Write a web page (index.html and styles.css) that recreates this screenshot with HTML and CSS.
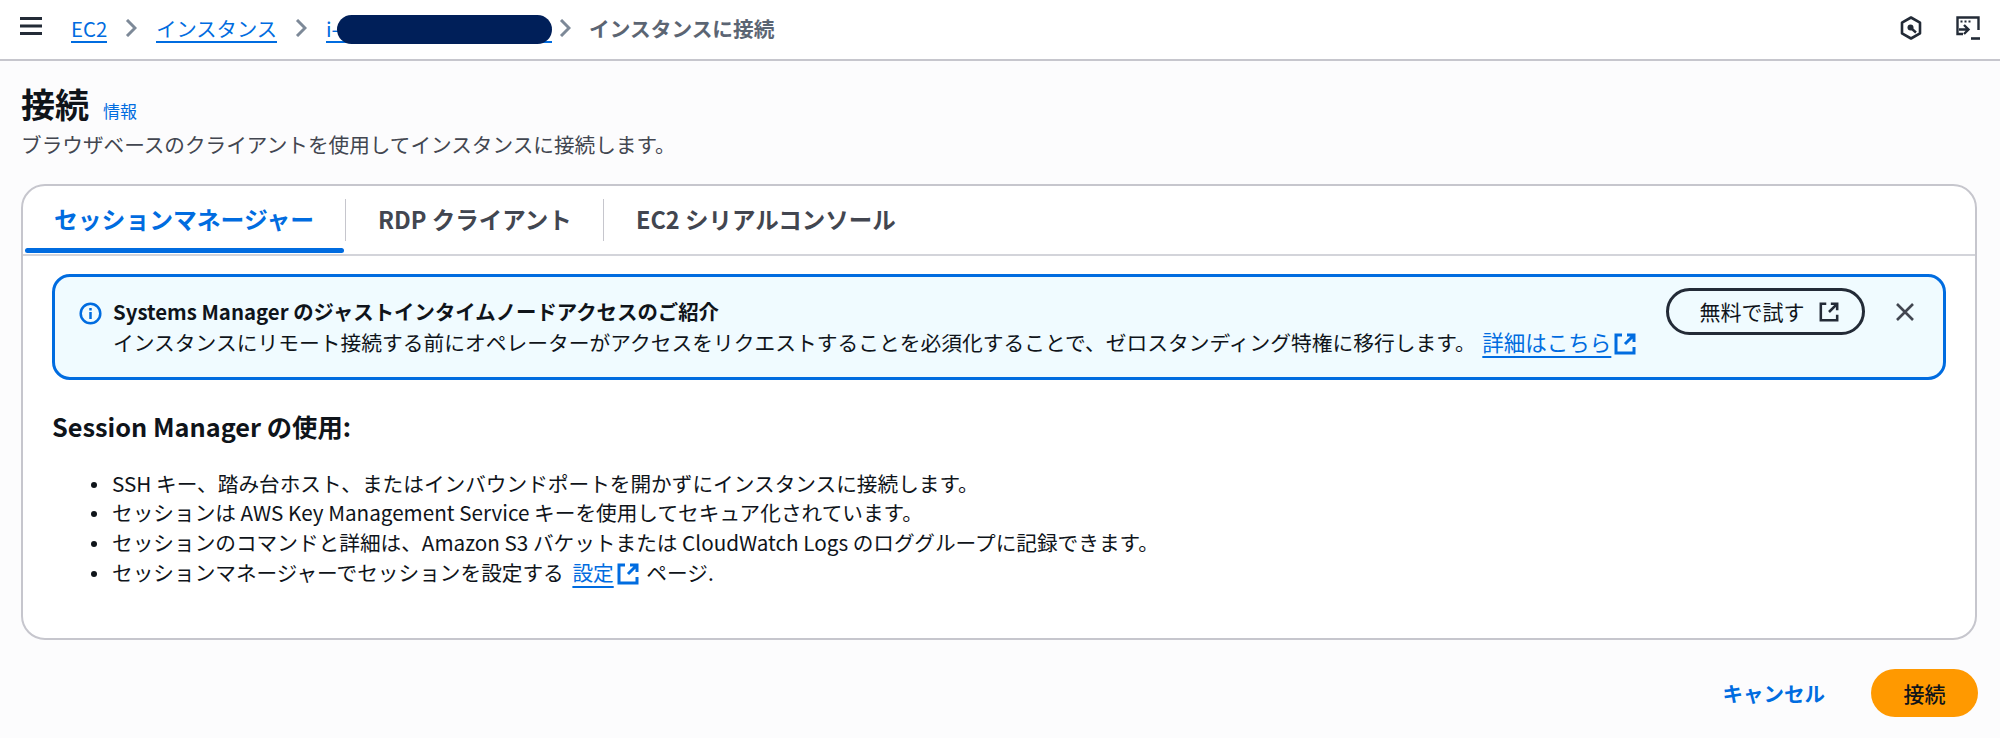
FILE: index.html
```html
<!DOCTYPE html>
<html lang="ja">
<head>
<meta charset="utf-8">
<title>インスタンスに接続</title>
<link rel="stylesheet" href="styles.css">
</head>
<body>
<header class="topbar">
  <svg class="menu-icon" width="22" height="18" viewBox="0 0 22 18"><path d="M0 1.500h22M0 9h22M0 16.500h22" stroke="#232b37" stroke-width="3" fill="none"/></svg>
  <nav class="crumbs">
    <a class="crumb crumb-ec2">EC2</a>
    <svg class="chev" width="12" height="18" viewBox="0 0 12 18"><path d="M2 1l8 8-8 8" stroke="#7d8998" stroke-width="3" fill="none"/></svg>
    <a class="crumb">インスタンス</a>
    <svg class="chev" width="12" height="18" viewBox="0 0 12 18"><path d="M2 1l8 8-8 8" stroke="#7d8998" stroke-width="3" fill="none"/></svg>
    <a class="crumb crumb-id">i-<span class="redact"></span></a>
    <svg class="chev chev-tight" width="12" height="18" viewBox="0 0 12 18"><path d="M2 1l8 8-8 8" stroke="#7d8998" stroke-width="3" fill="none"/></svg>
    <span class="crumb-current">インスタンスに接続</span>
  </nav>
  <div class="top-icons">
    <svg width="22" height="24" viewBox="0 0 22 24"><path d="M11 1.500l9 5.200v10.600l-9 5.200-9-5.200V6.700z" fill="none" stroke="#232b37" stroke-width="2.600" stroke-linejoin="round"/><circle cx="10.500" cy="11.500" r="3" fill="#232b37"/><path d="M12 13l4 3.500" stroke="#232b37" stroke-width="2.400"/></svg>
    <svg width="25" height="25" viewBox="0 0 25 25"><path d="M7 18H1.500V1.500h21V14" fill="none" stroke="#232b37" stroke-width="2.400"/><path d="M4.500 5.500h2M8.500 5.500h2M12.500 5.500h2" stroke="#232b37" stroke-width="2.200"/><path d="M8 9l4.500 4.500L8 18M3 13.500h9" fill="none" stroke="#232b37" stroke-width="2.400"/><path d="M15 22.500h9" stroke="#232b37" stroke-width="2.600"/></svg>
  </div>
</header>

<main class="page">
  <div class="title-row">
    <h1 class="title">接続</h1>
    <a class="info">情報</a>
  </div>
  <p class="desc">ブラウザベースのクライアントを使用してインスタンスに接続します。</p>

  <section class="card">
    <div class="tabs">
      <div class="tab tab-active">セッションマネージャー</div>
      <div class="tab tab-rdp">RDP クライアント</div>
      <div class="tab tab-last">EC2 シリアルコンソール</div>
    </div>
    <div class="card-body">
      <div class="alert">
        <svg class="alert-icon" width="23" height="23" viewBox="0 0 23 23"><circle cx="11.500" cy="11.500" r="9.800" fill="none" stroke="#006ce0" stroke-width="2.500"/><path d="M11.500 10v7" stroke="#006ce0" stroke-width="2.500"/><path d="M11.500 6v2.500" stroke="#006ce0" stroke-width="2.500"/></svg>
        <div class="alert-text">
          <div class="alert-title">Systems Manager のジャストインタイムノードアクセスのご紹介</div>
          <div>インスタンスにリモート接続する前にオペレーターがアクセスをリクエストすることを必須化することで、ゼロスタンディング特権に移行します。 <a class="link link-more">詳細はこちら</a><svg class="ext" width="22" height="22" viewBox="0 0 22 22"><path d="M8 2H2v18h18v-6M13 2h7v7M20 2l-9 9" fill="none" stroke="#006ce0" stroke-width="3"/></svg></div>
        </div>
        <button class="try-btn">無料で試す<svg width="20" height="20" viewBox="0 0 22 22"><path d="M8 2H2v18h18v-6M13 2h7v7M20 2l-9 9" fill="none" stroke="#232b37" stroke-width="2.800"/></svg></button>
        <svg class="close" width="20" height="20" viewBox="0 0 20 20"><path d="M2 2l16 16M18 2L2 18" stroke="#424650" stroke-width="2.600"/></svg>
      </div>
      <h2 class="section-title">Session Manager の使用:</h2>
      <ul class="bullets">
        <li>SSH キー、踏み台ホスト、またはインバウンドポートを開かずにインスタンスに接続します。</li>
        <li>セッションは AWS Key Management Service キーを使用してセキュア化されています。</li>
        <li>セッションのコマンドと詳細は、Amazon S3 バケットまたは CloudWatch Logs のロググループに記録できます。</li>
        <li>セッションマネージャーでセッションを設定する <a class="link link-setting">設定</a><svg class="ext ext-setting" width="22" height="22" viewBox="0 0 22 22"><path d="M8 2H2v18h18v-6M13 2h7v7M20 2l-9 9" fill="none" stroke="#006ce0" stroke-width="3"/></svg> ページ.</li>
      </ul>
    </div>
  </section>

  <footer class="actions">
    <a class="cancel">キャンセル</a>
    <button class="connect">接続</button>
  </footer>
</main>
</body>
</html>
```
FILE: styles.css
```css
* { box-sizing: border-box; }
html, body { margin: 0; padding: 0; }
body {
  width: 2000px;
  height: 738px;
  overflow: hidden;
  background: #fcfcfd;
  color: #0f141a;
  font-family: "Noto Sans CJK JP", "Noto Sans", sans-serif;
  font-size: 20px;
}
a { color: #006ce0; }
.topbar {
  height: 61px;
  background: #fff;
  border-bottom: 2px solid #c6c6cd;
  display: flex;
  align-items: center;
  padding: 0 19px 3px 20px;
}
.menu-icon { margin-top: -5px; }
.crumbs {
  display: flex;
  align-items: center;
  margin-left: 29px;
  font-size: 20.300px;
  flex: 1;
}
.crumb {
  line-height: 26px;
  border-bottom: 2px solid #006ce0;
  margin-top: 1px;
}
.crumb-id {
  display: flex;
  align-items: center;
  height: 28px;
  width: 226px;
}
.redact {
  display: block;
  width: 215px;
  height: 29px;
  margin: 3px 0 0 -2px;
  background: #001f59;
  border-radius: 15px;
  flex: none;
}
.chev { margin: 0 19px 0 18px; flex: none; }
.chev-tight { margin: 0 18px 0 7px; }
.crumb-current { color: #5b6573; font-weight: 700; font-size: 20.700px; }
.top-icons { display: flex; align-items: center; gap: 34px; }
.page { padding: 0 23px 0 21px; }
.title-row {
  display: flex;
  align-items: baseline;
  gap: 14px;
  padding-top: 24px;
}
.title { margin: 0; font-size: 34px; line-height: 38px; font-weight: 700; }
.info { font-size: 17px; line-height: 24px; }
.desc { margin: 6px 0 0; font-size: 20.630px; line-height: 30px; color: #424650; }
.card {
  margin-top: 25px;
  height: 456px;
  background: #fff;
  border: 2px solid #c6c6cd;
  border-radius: 24px;
  overflow: hidden;
}
.tabs {
  display: flex;
  height: 70px;
  border-bottom: 2px solid #d3d4da;
  align-items: flex-start;
}
.tab {
  position: relative;
  font-size: 23.500px;
  font-weight: 700;
  line-height: 40px;
  height: 42px;
  margin-top: 13px;
  padding: 0 0 0 32px;
  color: #424650;
  border-right: 1px solid #c6c6cd;
  white-space: nowrap;
}
.tab-active { color: #006ce0; width: 323px; padding-left: 31px; font-size: 23.800px; }
.tab-rdp { width: 258px; }
.tab-last { border-right: 0; }
.tab-active::after {
  content: "";
  position: absolute;
  left: 2px;
  right: 1px;
  bottom: -12px;
  height: 5px;
  border-radius: 3px;
  background: #006ce0;
}
.card-body { padding: 18px 29px 0 29px; }
.alert {
  display: flex;
  align-items: flex-start;
  height: 106px;
  padding: 20px 28px 0 25px;
  background: #f0fbff;
  border: 3px solid #006ce0;
  border-radius: 18px;
  font-size: 20.750px;
  line-height: 29.500px;
}
.alert-icon { flex: none; margin: 5px 11px 0 -1px; }
.alert-text { flex: 1; min-width: 0; white-space: nowrap; }
.alert-title { font-weight: 700; font-size: 20.400px; }
.link {
  text-decoration: underline;
  text-decoration-thickness: 2px;
  text-underline-offset: 5px;
}
.link-more { font-size: 21.500px; margin-left: 2px; }
.link-setting { margin-left: 4px; }
.ext { vertical-align: -4px; margin-left: 3px; }
.ext-setting { margin-right: 3px; }
.try-btn {
  flex: none;
  display: flex;
  align-items: center;
  justify-content: center;
  gap: 14px;
  width: 199px;
  height: 47px;
  margin-top: -9px;
  padding: 0 0 0 7px;
  background: transparent;
  border: 3px solid #232b37;
  border-radius: 24px;
  font: inherit;
  font-size: 21px;
  color: #0f141a;
}
.close { flex: none; margin: 5px 0 0 30px; }
.section-title { margin: 30px 0 0; font-size: 25.300px; line-height: 32px; font-weight: 700; }
.bullets {
  list-style: none;
  margin: 26.500px 0 0;
  padding: 0 0 0 60px;
  font-size: 20.670px;
  line-height: 29.760px;
}
.bullets li::before {
  content: "";
  display: inline-block;
  width: 6px;
  height: 6px;
  margin: 0 15px 4px -21px;
  border-radius: 50%;
  background: #0f141a;
}
.actions {
  display: flex;
  justify-content: flex-end;
  align-items: center;
  gap: 46px;
  margin: 29px -1px 0 0;
}
.cancel { font-size: 20.500px; font-weight: 700; }
.connect {
  width: 107px;
  height: 48px;
  border: 0;
  border-radius: 24px;
  background: #ff9900;
  font: inherit;
  font-size: 21px;
  font-weight: 500;
  color: #0f141a;
}
```
